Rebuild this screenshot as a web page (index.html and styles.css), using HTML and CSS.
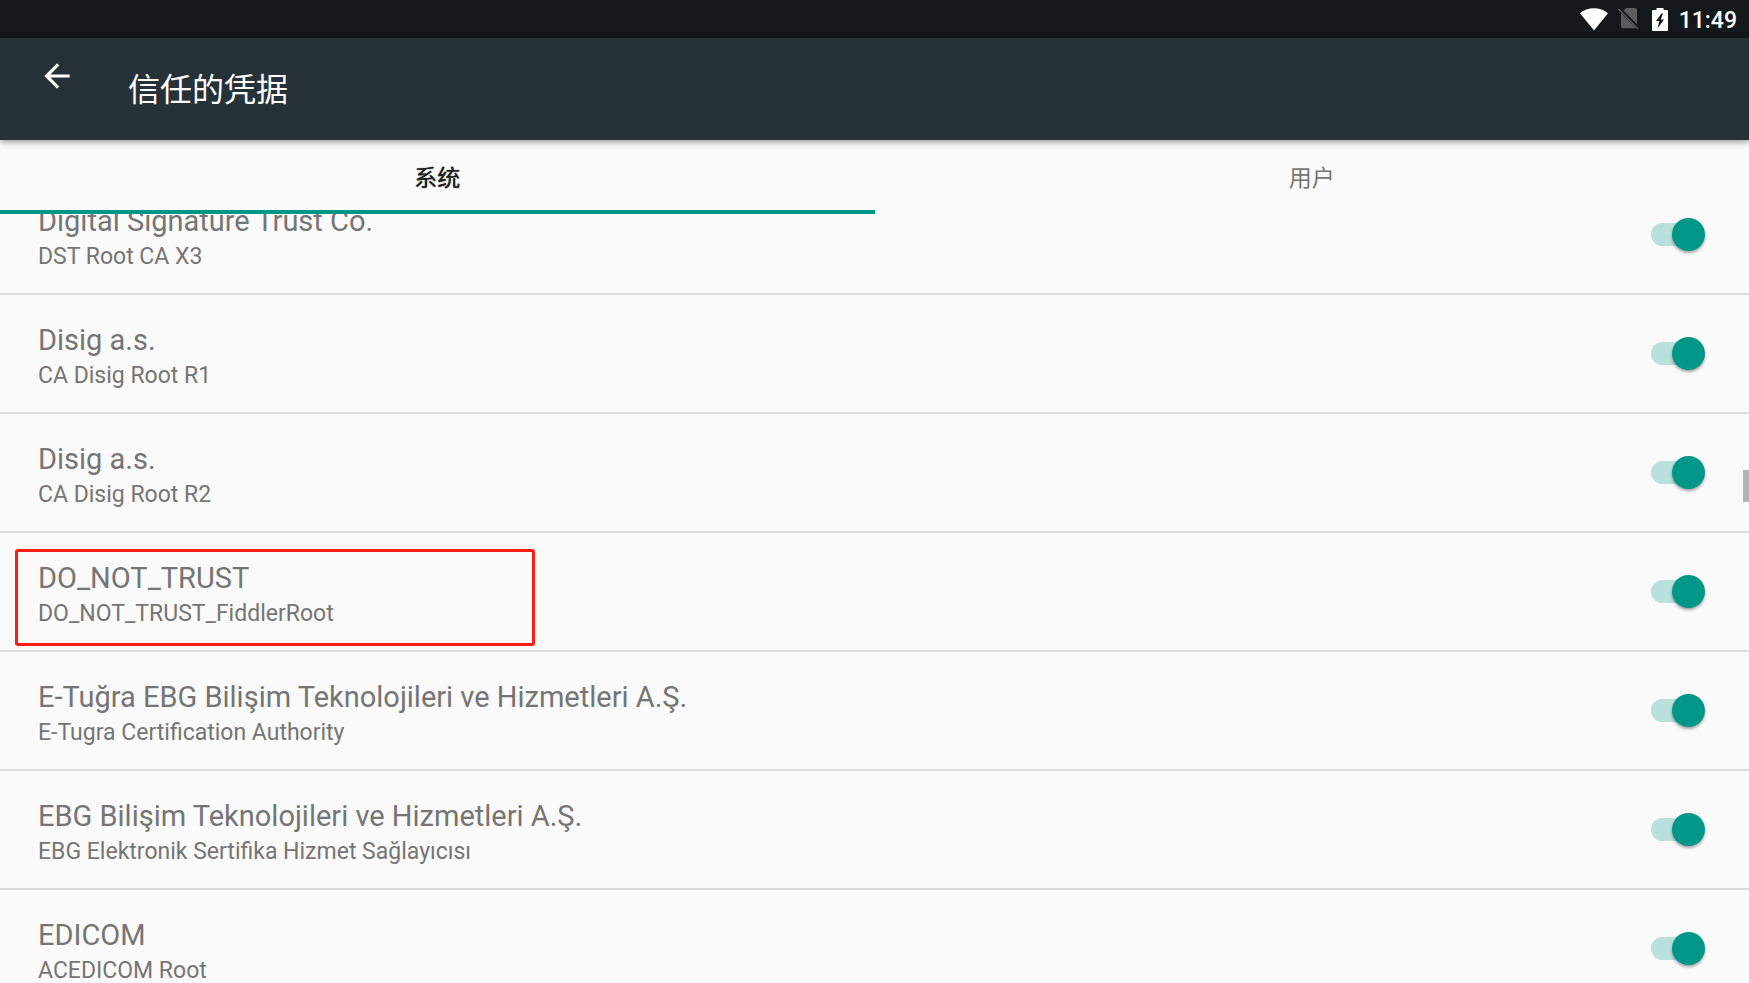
FILE: index.html
```html
<!DOCTYPE html>
<html lang="zh-CN">
<head>
<meta charset="utf-8">
<title>信任的凭据</title>
<link rel="stylesheet" href="styles.css">
</head>
<body>
<div class="screen">
  <div class="status-bar">
    <svg class="wifi" viewBox="0 0 28 23" aria-hidden="true"><path fill="#fff" d="M14 22.500L0 5.200C4 2 8.500.200 14 .200S24 2 28 5.200z"/></svg>
    <svg class="sim" viewBox="0 0 21 22" aria-hidden="true"><path fill="#5b5d5f" d="M8 0h9a2 2 0 0 1 2 2v14.200L5.500 2.500zM3 5.200L17.300 19.700Q17 20.200 16 20.200H5a2 2 0 0 1-2-2z"/><path stroke="#5b5d5f" stroke-width="1.600" d="M.600 1.300L20 21"/></svg>
    <svg class="battery" viewBox="0 0 16 23" aria-hidden="true"><path fill="#fff" fill-rule="evenodd" d="M4.500 0h7v2h3.500a1 1 0 0 1 1 1V22a1 1 0 0 1-1 1h-14A1 1 0 0 1 0 22V3A1 1 0 0 1 1 2H4.500zM9.500 5.500L4 13H7.300L5.500 20.500L12 11.500H8.700L11 5.500z"/></svg>
    <time class="clock">11:49</time>
  </div>
  <header class="app-bar">
    <button class="back" type="button" aria-label="返回"><svg viewBox="0 0 24 24" aria-hidden="true"><path fill="#fff" d="M20 11H7.830l5.590-5.590L12 4l-8 8 8 8 1.410-1.410L7.830 13H20v-2z"/></svg></button>
    <h1 class="title">信任的凭据</h1>
  </header>
  <nav class="tabs" role="tablist">
    <button class="tab tab-active" type="button" role="tab" aria-selected="true">系统</button>
    <button class="tab" type="button" role="tab" aria-selected="false">用户</button>
  </nav>
  <main class="viewport">
    <div class="list">
      <label class="row"><span class="text"><span class="name">Digital Signature Trust Co.</span><span class="sub">DST Root CA X3</span></span><input class="switch" type="checkbox" role="switch" checked></label>
      <label class="row"><span class="text"><span class="name">Disig a.s.</span><span class="sub">CA Disig Root R1</span></span><input class="switch" type="checkbox" role="switch" checked></label>
      <label class="row"><span class="text"><span class="name">Disig a.s.</span><span class="sub">CA Disig Root R2</span></span><input class="switch" type="checkbox" role="switch" checked></label>
      <label class="row row-marked"><span class="text"><span class="name">DO_NOT_TRUST</span><span class="sub">DO_NOT_TRUST_FiddlerRoot</span></span><input class="switch" type="checkbox" role="switch" checked></label>
      <label class="row"><span class="text"><span class="name">E-Tuğra EBG Bilişim Teknolojileri ve Hizmetleri A.Ş.</span><span class="sub">E-Tugra Certification Authority</span></span><input class="switch" type="checkbox" role="switch" checked></label>
      <label class="row"><span class="text"><span class="name">EBG Bilişim Teknolojileri ve Hizmetleri A.Ş.</span><span class="sub">EBG Elektronik Sertifika Hizmet Sağlayıcısı</span></span><input class="switch" type="checkbox" role="switch" checked></label>
      <label class="row"><span class="text"><span class="name">EDICOM</span><span class="sub">ACEDICOM Root</span></span><input class="switch" type="checkbox" role="switch" checked></label>
    </div>
    <div class="scroll-thumb"></div>
  </main>
</div>
</body>
</html>
```
FILE: styles.css
```css
*,
*::before,
*::after {
  box-sizing: border-box;
}

body {
  margin: 0;
  background: #fafafa;
  font-family: Roboto, "Noto Sans CJK SC", sans-serif;
}

button {
  padding: 0;
  border: 0;
  background: none;
  font-family: inherit;
}

.screen {
  display: flex;
  flex-direction: column;
  height: 100vh;
  overflow: hidden;
}

.status-bar {
  display: flex;
  align-items: center;
  justify-content: flex-end;
  flex: none;
  height: 38px;
  padding-right: 12px;
  background: #14181b;
}

.wifi {
  width: 28px;
  height: 23px;
  margin-right: 10px;
}

.sim {
  width: 21px;
  height: 22px;
  margin-right: 13px;
}

.battery {
  width: 16px;
  height: 23px;
  margin-right: 11px;
}

.clock {
  padding-top: 4px;
  color: #fff;
  font-size: 23px;
  font-weight: 500;
  line-height: 28px;
}

.app-bar {
  display: flex;
  align-items: center;
  flex: none;
  position: relative;
  z-index: 1;
  height: 102px;
  padding-left: 38px;
  background: #263238;
  box-shadow: 0 2px 6px rgba(0, 0, 0, 0.4);
}

.back {
  display: flex;
  align-items: center;
  align-self: flex-start;
  width: 38px;
  height: 75px;
  margin-right: 52px;
}

.back svg {
  width: 38px;
  height: 38px;
}

.title {
  margin: 0;
  padding-top: 1px;
  color: #fff;
  font-size: 32px;
  font-weight: 400;
  line-height: 40px;
}

.tabs {
  display: flex;
  flex: none;
  height: 74px;
}

.tab {
  flex: 1;
  padding-top: 1px;
  border-bottom: 4px solid transparent;
  color: #757575;
  font-size: 23px;
  font-weight: 400;
}

.tab-active {
  border-bottom-color: #009688;
  color: #212121;
  text-shadow: 0 0 1px #212121;
}

.viewport {
  flex: 1;
  min-height: 0;
  position: relative;
  overflow: hidden;
}

/* List is scrolled part-way into its first visible row. */
.list {
  margin-top: -38px;
}

.row {
  display: flex;
  align-items: flex-start;
  position: relative;
  padding: 26px 44px 19px 38px;
  border-bottom: 2px solid #dcdcdc;
  color: #757575;
}

.row-marked::before {
  content: "";
  position: absolute;
  top: 16px;
  left: 15px;
  width: 520px;
  height: 97px;
  border: 3px solid #ff1e12;
  border-radius: 3px;
}

.text {
  flex: 1;
}

.name,
.sub {
  display: block;
}

.name {
  font-size: 29px;
  line-height: 38px;
}

.sub {
  font-size: 23px;
  line-height: 34px;
}

.switch {
  appearance: none;
  display: flex;
  align-items: center;
  position: relative;
  width: 54px;
  height: 33px;
  margin: 16px 0 0;
}

.switch::before {
  content: "";
  width: 48px;
  height: 23px;
  border-radius: 12px;
  background: #b8e0dc;
}

.switch::after {
  content: "";
  position: absolute;
  top: 0;
  right: 0;
  width: 33px;
  height: 33px;
  border-radius: 50%;
  background: #009688;
  box-shadow: 0 2px 3px rgba(0, 0, 0, 0.35);
}

.scroll-thumb {
  position: absolute;
  top: 256px;
  right: 0;
  width: 6px;
  height: 32px;
  background: #b3b3b3;
}
```
